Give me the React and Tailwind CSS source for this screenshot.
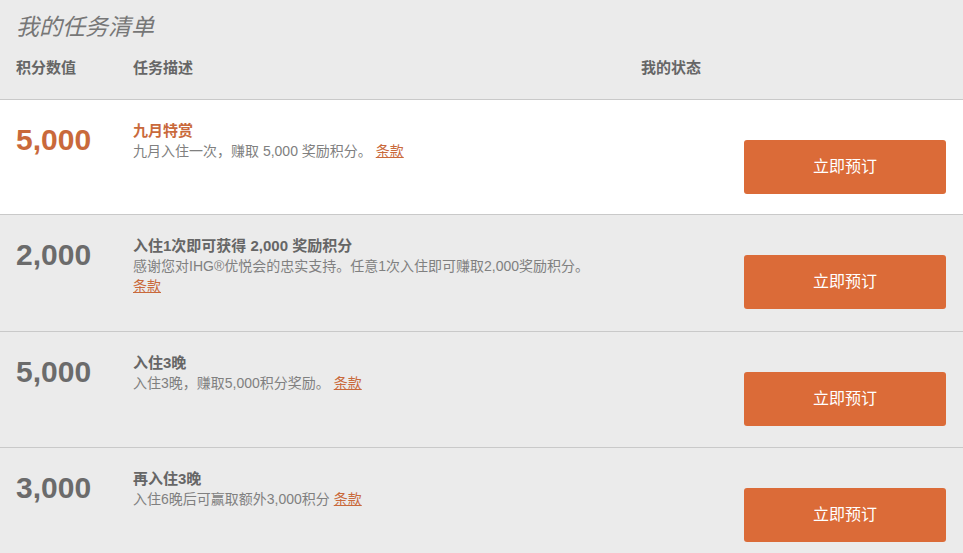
import React from 'react';

const tasks = [
  {
    points: '5,000',
    title: '九月特赏',
    desc: '九月入住一次，赚取 5,000 奖励积分。',
    featured: true,
    height: 'h-[115px]',
  },
  {
    points: '2,000',
    title: '入住1次即可获得 2,000 奖励积分',
    desc: '感谢您对IHG®优悦会的忠实支持。任意1次入住即可赚取2,000奖励积分。',
    breakTerms: true,
    height: 'h-[117px]',
  },
  {
    points: '5,000',
    title: '入住3晚',
    desc: '入住3晚，赚取5,000积分奖励。',
    height: 'h-[116px]',
  },
  {
    points: '3,000',
    title: '再入住3晚',
    desc: '入住6晚后可赢取额外3,000积分',
    height: 'h-[116px]',
  },
];

function TaskRow({ task }) {
  return (
    <div
      className={`flex ${task.height} border-b border-[#c9c9c9] pl-4 pr-[17px] ${
        task.featured ? 'bg-white' : 'bg-[#ebebeb]'
      }`}
    >
      <div
        className={`w-[117px] shrink-0 pt-[22px] text-[30px] font-bold leading-[36px] ${
          task.featured ? 'text-[#c9693b]' : 'text-[#6b6b6b]'
        }`}
      >
        {task.points}
      </div>
      <div className="flex-1 pt-[21px]">
        <h4
          className={`text-[15px] font-bold leading-[20px] ${
            task.featured ? 'text-[#c9693b]' : 'text-[#666]'
          }`}
        >
          {task.title}
        </h4>
        <p className="text-[14px] leading-[20px] text-[#808080]">
          {task.desc}
          {task.breakTerms ? <br /> : ' '}
          <a href="#" className="text-[#c9693b] underline">条款</a>
        </p>
      </div>
      <div className="shrink-0 pt-10">
        <button className="h-[54px] w-[202px] rounded-[3px] bg-[#db6b38] text-[16px] text-white">
          立即预订
        </button>
      </div>
    </div>
  );
}

export default function App() {
  return (
    <div
      className="min-h-[553px] bg-[#ebebeb]"
      style={{ fontFamily: '"Liberation Sans", "Noto Sans CJK SC", sans-serif' }}
    >
      <div className="h-[100px] border-b border-[#c9c9c9] px-4">
        <h2 className="pt-[10px] text-[23px] italic leading-[34px] text-[#777]">我的任务清单</h2>
        <div className="mt-[14px] flex text-[15px] font-bold leading-[20px] text-[#666]">
          <div className="w-[117px]">积分数值</div>
          <div className="w-[508px]">任务描述</div>
          <div>我的状态</div>
        </div>
      </div>
      {tasks.map((task, i) => (
        <TaskRow key={i} task={task} />
      ))}
    </div>
  );
}
